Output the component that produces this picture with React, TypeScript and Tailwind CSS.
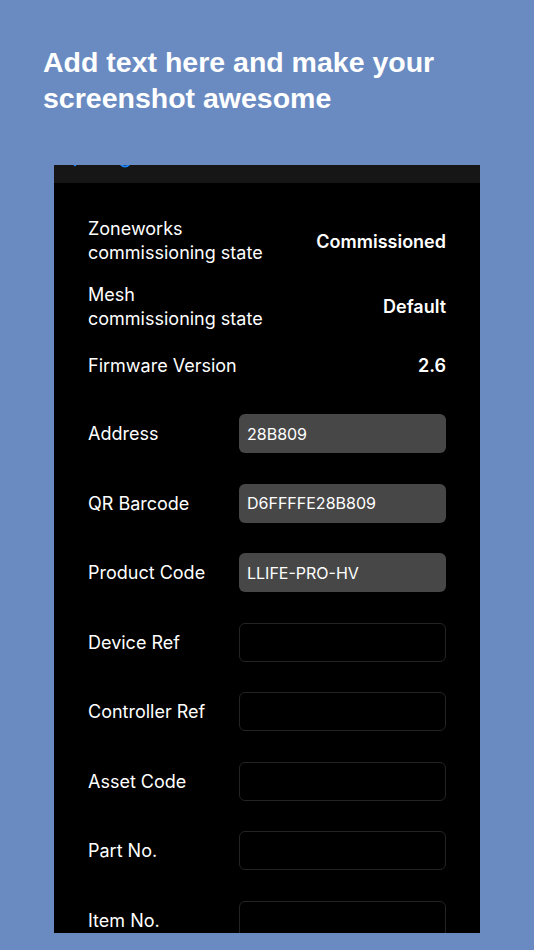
const infoRows = [
  { label: ['Zoneworks', 'commissioning state'], value: 'Commissioned' },
  { label: ['Mesh', 'commissioning state'], value: 'Default' },
]

const fields = [
  { label: 'Address', value: '28B809' },
  { label: 'QR Barcode', value: 'D6FFFFE28B809' },
  { label: 'Product Code', value: 'LLIFE-PRO-HV' },
  { label: 'Device Ref', value: '' },
  { label: 'Controller Ref', value: '' },
  { label: 'Asset Code', value: '' },
  { label: 'Part No.', value: '' },
  { label: 'Item No.', value: '' },
]

export default function App() {
  return (
    <div className="w-[534px] h-[950px] bg-[#6a8bc2] overflow-hidden flex flex-col">
      {/* Headline */}
      <h1
        className="pt-[44px] pl-[43px] text-white font-bold text-[28.5px] leading-[36px]"
        style={{ fontFamily: '"Liberation Sans", Arial, sans-serif' }}
      >
        Add text here and make your
        <br />
        screenshot awesome
      </h1>

      {/* Phone screen */}
      <div
        className="mt-[49px] ml-[54px] w-[426px] h-[768px] bg-black overflow-hidden flex flex-col text-white"
        style={{ fontFamily: 'Inter, "Noto Sans", sans-serif' }}
      >
        <div className="h-[18px] bg-[#161616] relative shrink-0">
          <svg className="absolute left-[18px] -top-[4px]" width="10" height="8" viewBox="0 0 10 8">
            <path d="M6 0 L3 4" stroke="#1a84ff" strokeWidth="2.4" strokeLinecap="round" fill="none" />
          </svg>
          <svg className="absolute left-[64px] -top-[3px]" width="14" height="8" viewBox="0 0 14 8">
            <path d="M1.5 1 Q7 8 12.5 1" stroke="#1a84ff" strokeWidth="2" fill="none" />
          </svg>
        </div>

        <div className="px-[34px] flex flex-col">
          <div className="mt-[34px] flex items-center justify-between">
            <div className="text-[18px] leading-[24px]">
              {infoRows[0].label[0]}
              <br />
              {infoRows[0].label[1]}
            </div>
            <div className="text-[18px] font-semibold">{infoRows[0].value}</div>
          </div>

          <div className="mt-[18px] flex items-center justify-between">
            <div className="text-[18px] leading-[23.5px]">
              {infoRows[1].label[0]}
              <br />
              {infoRows[1].label[1]}
            </div>
            <div className="text-[18px] font-semibold">{infoRows[1].value}</div>
          </div>

          <div className="mt-[23px] h-[24px] flex items-center justify-between">
            <div className="text-[18px]">Firmware Version</div>
            <div className="text-[18px] font-semibold">2.6</div>
          </div>

          <div className="mt-[37px] flex flex-col gap-[30.5px]">
            {fields.map((f) => (
              <div key={f.label} className="flex items-center justify-between">
                <div className="text-[18px]">{f.label}</div>
                <div
                  className={
                    f.value
                      ? 'w-[207px] h-[39px] rounded-[6px] bg-[#474747] flex items-center px-[8px] text-[16px]'
                      : 'w-[207px] h-[39px] rounded-[6px] border border-[#242424] flex items-center px-[8px] text-[16px]'
                  }
                >
                  {f.value}
                </div>
              </div>
            ))}
          </div>
        </div>
      </div>
    </div>
  )
}
